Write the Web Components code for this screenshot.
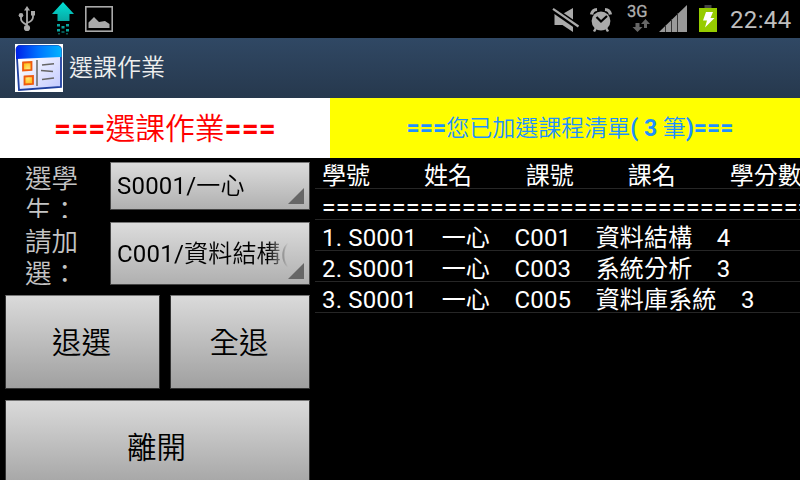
<!DOCTYPE html>
<html lang="zh-Hant">
<head>
<meta charset="utf-8">
<title>選課作業</title>
<style>
body{margin:0;background:#000;width:800px;height:480px;overflow:hidden;font-family:Roboto,"Noto Sans CJK TC",sans-serif}
</style>
</head>
<body>
<course-app></course-app>
<script>
const define = (name, css, html) => customElements.define(name, class extends HTMLElement {
  constructor() {
    super();
    this.attachShadow({mode: 'open'}).innerHTML = `<style>*{box-sizing:border-box}${css}</style>${html}`;
  }
});

define('status-bar', `
:host{display:flex;height:38px;background:#000;color:#b0b0b0;justify-content:space-between}
svg{display:block;flex:none}
.r{display:flex}
.net{font-size:16.5px;line-height:15px;width:23px;padding-top:4px;margin-left:11px}
.net span{display:block;height:15px;-webkit-text-stroke:.3px #b0b0b0}
.net svg{margin-left:5px}
.clock{width:70px;padding-top:6px;font-size:24px;line-height:28px;letter-spacing:.35px;font-weight:400;color:#bebebe}
`, `
<svg width="120" height="38" viewBox="0 0 120 38">
 <defs><linearGradient id="c" x2="0" y2="1"><stop stop-color="#00e0d5"/><stop offset="1" stop-color="#08a9a3"/></linearGradient></defs>
 <g fill="none" stroke="#aaa" stroke-width="1.8"><path d="M27 8V28M21 16v3q0 3 6 6M33 15v2q0 4-6 6"/></g>
 <g fill="#aaa"><path d="M27 6l3 4.5h-6z"/><circle cx="27" cy="28" r="3.1"/><circle cx="21" cy="15.3" r="2.3"/><rect x="31" y="11" width="4" height="4.5"/></g>
 <path d="M63 2L74 14H69.5V21H57.5V14H52z" fill="url(#c)"/>
 <g fill="#08a59f"><path d="M57 24h3v2.5h-3zM66 24h3v2.5h-3zM61.5 26h3v2.5h-3zM57 29h3v2.5h-3zM66 29h3v2.5h-3z"/><path opacity=".55" d="M61.5 31h3v2h-3zM58 33h2v1.5h-2zM66 33h2v1.5h-2z"/></g>
 <rect x="85.8" y="6.8" width="26.4" height="24.4" fill="none" stroke="#aaa" stroke-width="1.6"/>
 <path d="M88.500 28V22.500L94 17l5 5 6-1 4.500 3V28z" fill="#aaa"/>
</svg>
<div class="r">
<svg width="66" height="38" viewBox="550 0 66 38">
 <path d="M554.500 14h8l10.500-6v24l-10.500-7h-8z" fill="#aaa"/>
 <path d="M551 8L580 28" stroke="#000" stroke-width="6"/><path d="M553 8.800L578.500 26.500" stroke="#aaa" stroke-width="2.200"/>
 <circle cx="601" cy="21" r="9.4" fill="#aaa"/>
 <path d="M591.5 14.500a6 6 0 0 1 5.5-5M605 9.500a6 6 0 0 1 5.5 5" fill="none" stroke="#aaa" stroke-width="3.2"/>
 <path d="M596 28l-2 3.500M606 28l2 3.500" stroke="#aaa" stroke-width="2.5"/>
 <path d="M596.5 17L601 21.500l6-5.5" fill="none" stroke="#000" stroke-width="2.2"/>
</svg>
<div class="net"><span>3G</span>
 <svg width="18" height="14" viewBox="631 19 18 14"><path d="M636.5 32l-5-5h3v-4h4v4h3zM644.500 19l4.500 5h-3v4h-3v-4h-3z" fill="#666"/></svg></div>
<svg width="80" height="38" viewBox="650 0 80 38">
 <path d="M659 32L687 5V32z" fill="#999"/>
 <path d="M665.500 25v7M671.500 19v13M677.500 13v19" stroke="#333" stroke-width="1"/>
 <path d="M699 8h18v24h-18z" fill="#96cc00"/><path d="M704.500 5h7v3h-7z" fill="#444"/>
 <path d="M706 12h7l-2.500 6h4l-9.500 9.500 2-7h-4z" fill="#fff"/>
</svg>
<div class="clock">22:44</div>
</div>`);

define('app-bar', `
:host{display:flex;height:60px;align-items:center;padding-left:15px;gap:6px;background:linear-gradient(#304864,#26384d);color:#eee;font-size:24px;font-weight:350}
span{line-height:30px}svg{display:block;flex:none}
`, `
<svg width="48" height="48" viewBox="0 0 48 48">
 <defs><linearGradient id="b"><stop stop-color="#0020e8"/><stop offset=".5" stop-color="#0075ff"/><stop offset="1" stop-color="#00b4ff"/></linearGradient>
 <linearGradient id="p" x2="1" y2="1"><stop offset=".2" stop-color="#fff"/><stop offset="1" stop-color="#c0c8ff"/></linearGradient>
 <radialGradient id="o"><stop stop-color="#ffffb0"/><stop offset="1" stop-color="#ffc020"/></radialGradient></defs>
 <path d="M0 0h48v48H0z" fill="#fff"/>
 <path d="M1.500 6Q1.500 2 5 2H41Q46 2 46 6V43L4 46z" fill="url(#p)" stroke="#2040a0" stroke-width="1.800"/>
 <path d="M1 15V6Q1 1.500 5 1.500H41Q46.500 1.500 46.500 6v7z" fill="url(#b)"/>
 <path d="M8 18.500l8.500-.5v8l-8.500 .5zM9.500 32.500l8.500-.5v8l-8.500.5z" fill="url(#o)" stroke="#ee5a10" stroke-width="1.800"/>
 <path d="M22 16v26" stroke="#777" stroke-width="1.700"/>
 <path d="M27 21l12-1.300M26 26.500l12 1M27 35.500l12-1.500" stroke="#666" stroke-width="1.500"/>
</svg><span><slot></slot></span>`);

define('title-banner', `
:host{display:flex;align-items:center;justify-content:center;height:60px;font-weight:700}
span{white-space:pre}
::slotted(i){font-style:normal;font-weight:350}
`, `<span><slot></slot></span>`);

define('spinner-box', `
:host{display:block;border:1px solid #444;border-top-color:#777;background:linear-gradient(#dcdcdc,#b0b0b0);position:relative;color:#000;font-size:24px;font-weight:400;overflow:hidden}
.t{display:flex;align-items:center;height:100%;width:177px;padding:0 0 5px 6px;overflow:hidden;white-space:pre;letter-spacing:.2px;-webkit-mask-image:linear-gradient(90deg,#000 157px,transparent)}
::slotted(i){font-style:normal;font-weight:350}
svg{position:absolute;right:5px;bottom:5px}
`, `<div class="t"><span><slot></slot></span></div><svg width="16" height="16"><path d="M16 0V16H0z" fill="#666"/></svg>`);

define('grey-button', `
:host{display:flex;align-items:center;justify-content:center;border:1px solid #333;border-top-color:#777;background:linear-gradient(#dadada,#a0a0a0);color:#000;font-size:29.500px;font-weight:350;padding:0 2px 4px 0}
`, `<span><slot></slot></span>`);

define('list-row', `
:host{display:block;height:31px;border-bottom:1px solid #262626;white-space:pre;overflow:hidden;padding-left:7px;font-size:24px;line-height:36px;letter-spacing:.16px;color:#fff}
`, `<slot></slot>`);

define('course-app', `
:host{display:block;width:800px;height:480px;overflow:hidden;background:#000}
.banners{display:grid;grid-template-columns:330px 470px}
.red{background:#fff;color:#f00;font-size:29.800px;padding-bottom:5px}
.yel{background:#ff0;color:#1e90ff;font-size:23px;padding:0 0 4px 10px}
.main{display:grid;grid-template-columns:310px 485px;column-gap:5px;height:322px;overflow:hidden}
.form{display:grid;grid-template-columns:85px 200px;padding-left:25px;grid-template-rows:62px 66px}
.label{font-size:26.500px;line-height:32px;color:#c4c4c4;font-weight:350;width:56px;overflow:hidden;padding-top:5px;height:60px}
.l2{padding-top:6px;height:70px}
.s1{margin-top:4px;height:48px}.s2{margin-top:2px;height:63px}
.btns{display:grid;grid-template-columns:155px 140px;gap:11px 10px;grid-template-rows:94px 94px;padding:9px 0 0 5px}
.wide{grid-column:1/3;width:305px}
.list{width:485px;overflow:hidden}
.head{line-height:37px;letter-spacing:.03px}
.eq{letter-spacing:.4px;line-height:37px;font-size:24.500px;-webkit-text-stroke:.2px #fff}
`, `
<status-bar></status-bar>
<app-bar>選課作業</app-bar>
<div class="banners">
 <title-banner class="red">===<i>選課作業</i>===</title-banner>
 <title-banner class="yel">===<i>您已加選課程清單</i>( 3 <i>筆</i>)===</title-banner>
</div>
<div class="main">
 <div>
  <div class="form">
   <div class="label">選學生：</div><spinner-box class="s1">S0001/<i>一心</i></spinner-box>
   <div class="label l2">請加選：</div><spinner-box class="s2">C001/<i>資料結構</i>(</spinner-box>
  </div>
  <div class="btns">
   <grey-button>退選</grey-button><grey-button>全退</grey-button>
   <grey-button class="wide">離開</grey-button>
  </div>
 </div>
 <div class="list">
  <list-row class="head">學號         姓名         課號         課名         學分數</list-row>
  <list-row class="eq" style="letter-spacing:.55px">===================================</list-row>
  <list-row>1. S0001    一心    C001    資料結構    4</list-row>
  <list-row>2. S0001    一心    C003    系統分析    3</list-row>
  <list-row>3. S0001    一心    C005    資料庫系統    3</list-row>
 </div>
</div>`);
</script>
</body>
</html>
